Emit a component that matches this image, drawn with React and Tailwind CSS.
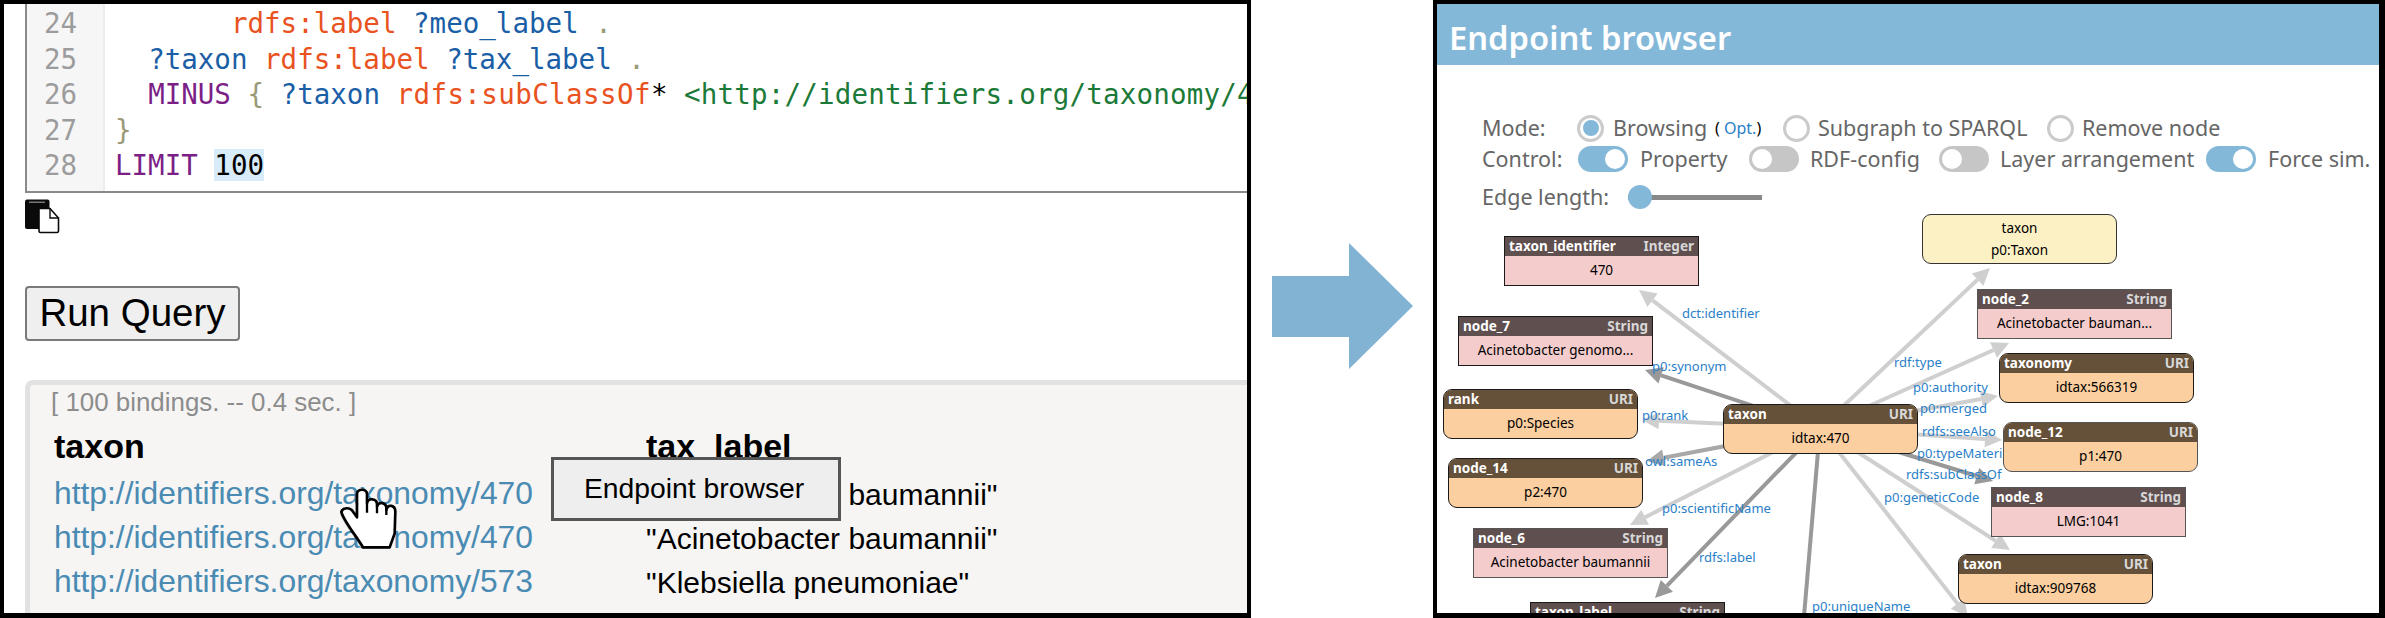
const mono = "font-['DejaVu_Sans_Mono',monospace]";
const sans = "font-['Liberation_Sans',Arial,sans-serif]";
const noto = "font-['Noto_Sans',sans-serif]";

const K = ({ c, children, x = '' }) => {
  const m = { p: 'text-[#e8531f]', v: 'text-[#1a5ea6]', k: 'text-[#7b1f87]', g: 'text-[#1c7a38]', o: 'text-[#9a9a78]', b: 'text-black' };
  return <span className={`${m[c]} ${x}`}>{children}</span>;
};

function CodeBox() {
  const nums = [24, 25, 26, 27, 28];
  return (
    <div className={`flex h-[189px] shrink-0 ml-[21px] border-l-2 border-b-2 border-[#8a8a8a] overflow-hidden ${mono} text-[27.5px] leading-[35.5px]`}>
      <div className="w-[78px] shrink-0 h-full bg-[#f6f6f6] border-r-2 border-[#ececec] text-[#9c9c9c] pl-[17px] pt-[2px]">
        {nums.map(n => <div key={n}>{n}</div>)}
      </div>
      <div className="pl-[10px] pt-[2px] whitespace-pre">
        <div>{'       '}<K c="p">rdfs:label</K> <K c="v">?meo_label</K> <K c="o">.</K></div>
        <div>{'  '}<K c="v">?taxon</K> <K c="p">rdfs:label</K> <K c="v">?tax_label</K> <K c="o">.</K></div>
        <div>{'  '}<K c="k">MINUS</K> <K c="o">{'{'}</K> <K c="v">?taxon</K> <K c="p" x="tracking-[0.4px]">rdfs:subClassOf</K><K c="b">*</K> <K c="g" x="tracking-[0.2px]">{'<http://identifiers.org/taxonomy/470>'}</K></div>
        <div><K c="o">{'}'}</K></div>
        <div><K c="k">LIMIT</K> <span className="bg-[#d8ebf8] text-black">100</span></div>
      </div>
    </div>
  );
}

function CopyIcon() {
  return (
    <svg width="36" height="35" viewBox="0 0 36 35" className="block ml-[20px] mt-[6px] shrink-0">
      <rect x="1" y="0.5" width="24.5" height="29.5" rx="2" fill="#0a0a0a" />
      <rect x="5" y="2.5" width="16" height="1.5" fill="#777" />
      <path d="M15 9.5 L26 9.5 L34.5 19 L34.5 32 Q34.5 33.5 33 33.5 L16.5 33.5 Q15 33.5 15 32 Z" fill="#fff" stroke="#0a0a0a" strokeWidth="1.6" />
      <path d="M26 9.5 L26 19 L34.5 19" fill="none" stroke="#0a0a0a" strokeWidth="1.4" />
    </svg>
  );
}

function HandCursor() {
  const d = "M125 125 C130 112 150 112 158 122 L172 142 L172 72 C172 55 202 55 202 72 L202 100 C205 82 232 85 232 103 L232 110 C236 93 260 97 260 114 L260 120 C265 100 287 105 287 125 L285 190 L270 232 L190 232 C175 205 130 150 125 125 Z";
  return (
    <svg width="60" height="65" viewBox="118 48 180 195" className="absolute left-[335px] top-[482px]">
      <path d={d} fill="#000" opacity="0.35" transform="translate(-4 4)" />
      <path d={d} fill="#fff" stroke="#000" strokeWidth="8" strokeLinejoin="round" />
      <path d="M202 100 L202 128 M232 110 L232 130 M260 120 L260 135" stroke="#000" strokeWidth="7" fill="none" />
    </svg>
  );
}

function LeftPanel() {
  return (
    <div className={`relative w-[1251px] h-[618px] shrink-0 flex flex-col bg-white border-l-4 border-r-4 border-t-4 border-b-[5px] border-black overflow-hidden ${sans}`}>
      <CodeBox />
      <CopyIcon />
      <button className="ml-[21px] mt-[52px] w-[215px] h-[55px] shrink-0 bg-[#efefef] border-2 border-[#7a7a7a] rounded-[4px] text-[38.5px] leading-none text-black">Run Query</button>
      <div className="ml-[21px] mt-[39px] flex-1 bg-[#f6f5f4] border-l-[5px] border-t-[5px] border-[#e2e2e2] rounded-tl-[8px] overflow-hidden">
        <div className="pl-[21px] h-[34px] leading-[34px] text-[25.9px] text-[#8c8c8c]">[ 100 bindings. -- 0.4 sec. ]</div>
        <div className="mt-[6px] grid grid-cols-[592px_1fr] pl-[24px] auto-rows-[44px] items-center">
          <div className="font-bold text-[34px] text-black mb-[2px]">taxon</div>
          <div className="font-bold text-[34px] text-black mb-[2px]">tax_label</div>
          <a className="text-[31.8px] text-[#4a8bb3] mt-[6px]">http://identifiers.org/taxonomy/470</a>
          <div className="text-[30px] text-black mt-[6px]">"Acinetobacter baumannii"</div>
          <a className="text-[31.8px] text-[#4a8bb3] mt-[6px]">http://identifiers.org/taxonomy/470</a>
          <div className="text-[30px] text-black mt-[6px]">"Acinetobacter baumannii"</div>
          <a className="text-[31.8px] text-[#4a8bb3] mt-[6px]">http://identifiers.org/taxonomy/573</a>
          <div className="text-[30px] text-black mt-[6px]">"Klebsiella pneumoniae"</div>
        </div>
      </div>
      <div className="absolute left-[547px] top-[453px] w-[290px] h-[64px] flex items-center pl-[30px] pb-[2px] bg-[#eeeeee] border-[3px] border-[#555] text-[28.3px] text-black">Endpoint browser</div>
      <HandCursor />
    </div>
  );
}

function BigArrow() {
  return (
    <svg width="141" height="126" viewBox="0 0 141 126" className="block shrink-0 ml-[21px] mt-[243px]">
      <polygon points="0,33 77,33 77,0 141,63 77,126 77,94 0,94" fill="#83b3d3" />
    </svg>
  );
}

function Radio({ on }) {
  return (
    <span className="w-[27px] h-[27px] shrink-0 rounded-full border-[3px] border-[#cbcbcb] bg-white flex items-center justify-center">
      {on && <span className="w-[16px] h-[16px] rounded-full bg-[#84b8d9]" />}
    </span>
  );
}

function Toggle({ on }) {
  return (
    <span className={`w-[50px] h-[26px] shrink-0 rounded-full flex items-center px-[3px] ${on ? 'bg-[#84b8d9] justify-end' : 'bg-[#c6c6c6] justify-start'}`}>
      <span className="w-[20px] h-[20px] rounded-full bg-white" />
    </span>
  );
}

function Edge({ x1, y1, x2, y2, c = '#cfcfcf', w = 4 }) {
  const dx = x2 - x1, dy = y2 - y1, L = Math.hypot(dx, dy), ux = dx / L, uy = dy / L;
  const bx = x2 - ux * 17, by = y2 - uy * 17, hw = 8.5;
  return (
    <g>
      <line x1={x1} y1={y1} x2={bx} y2={by} stroke={c} strokeWidth={w} />
      <polygon points={`${x2},${y2} ${bx - uy * hw},${by + ux * hw} ${bx + uy * hw},${by - ux * hw}`} fill={c} />
    </g>
  );
}

const edges = [
  { x2: 1639, y2: 290 },
  { x2: 1645, y2: 370, c: '#999999', w: 4 },
  { x2: 1642, y2: 420 },
  { x2: 1647, y2: 461, c: '#a8a8a8', w: 4 },
  { x2: 1630, y2: 525 },
  { x2: 1655, y2: 598, c: '#999999', w: 4 },
  { x2: 1802, y2: 640, c: '#999999', w: 4 },
  { x2: 1968, y2: 617 },
  { x2: 1990, y2: 268 },
  { x2: 2009, y2: 343 },
  { x2: 1998, y2: 396 },
  { x2: 2002, y2: 440 },
  { x2: 1993, y2: 481, c: '#999999', w: 4 },
  { x2: 2010, y2: 550 },
];

const labels = [
  ['dct:identifier', 'left-[245px] top-[93px]'],
  ['p0:synonym', 'left-[215px] top-[146px]'],
  ['p0:rank', 'left-[205px] top-[195px]'],
  ['owl:sameAs', 'left-[208px] top-[241px]'],
  ['p0:scientificName', 'left-[225px] top-[288px]'],
  ['rdfs:label', 'left-[262px] top-[337px]'],
  ['p0:uniqueName', 'left-[375px] top-[386px]'],
  ['rdf:type', 'left-[457px] top-[142px]'],
  ['p0:authority', 'left-[476px] top-[167px]'],
  ['p0:merged', 'left-[483px] top-[188px]'],
  ['rdfs:seeAlso', 'left-[485px] top-[211px]'],
  ['p0:typeMaterial', 'left-[480px] top-[233px]'],
  ['rdfs:subClassOf', 'left-[469px] top-[254px]'],
  ['p0:geneticCode', 'left-[447px] top-[277px]'],
];

const nodes = [
  { n: 'taxon_identifier', t: 'Integer', v: '470', k: 's', p: 'left-[67px] top-[26px]' },
  { n: 'node_7', t: 'String', v: 'Acinetobacter genomo...', k: 's', p: 'left-[21px] top-[106px]' },
  { n: 'rank', t: 'URI', v: 'p0:Species', k: 'u', p: 'left-[6px] top-[179px]' },
  { n: 'taxon', t: 'URI', v: 'idtax:470', k: 'u', p: 'left-[286px] top-[194px]' },
  { n: 'node_14', t: 'URI', v: 'p2:470', k: 'u', p: 'left-[11px] top-[248px]' },
  { n: 'node_6', t: 'String', v: 'Acinetobacter baumannii', k: 's', f: 1, p: 'left-[36px] top-[318px]' },
  { n: 'taxon_label', t: 'String', v: '', k: 's', p: 'left-[93px] top-[392px]' },
  { n: 'node_2', t: 'String', v: 'Acinetobacter bauman...', k: 's', f: 1, p: 'left-[540px] top-[79px]' },
  { n: 'taxonomy', t: 'URI', v: 'idtax:566319', k: 'u', p: 'left-[562px] top-[143px]' },
  { n: 'node_12', t: 'URI', v: 'p1:470', k: 'u', f: 1, p: 'left-[566px] top-[212px]' },
  { n: 'node_8', t: 'String', v: 'LMG:1041', k: 's', f: 1, p: 'left-[554px] top-[277px]' },
  { n: 'taxon', t: 'URI', v: 'idtax:909768', k: 'u', p: 'left-[521px] top-[344px]' },
];

function GraphNode({ n, t, v, k, p, f }) {
  const u = k === 'u';
  return (
    <div className={`absolute ${p} w-[195px] h-[50px] flex flex-col overflow-hidden border-[1.5px] ${f ? 'border-[#555]' : 'border-[#1a1a1a]'} ${u ? 'rounded-[9px] bg-[#fbcf9f]' : 'bg-[#f4cccc]'}`}>
      <div className={`h-[19px] shrink-0 flex items-center justify-between px-[4px] text-[13.5px] font-bold ${u ? 'bg-[#655039]' : 'bg-[#5f4f4f]'}`}>
        <span className="text-white">{n}</span>
        <span className="text-[#d8d8d8]">{t}</span>
      </div>
      <div className="flex-1 flex items-center justify-center text-[13.5px] text-black pb-[1px]">{v}</div>
    </div>
  );
}

function RightPanel() {
  return (
    <div className={`w-[952px] h-[618px] shrink-0 ml-[20px] flex flex-col bg-white border-l-4 border-r-[6px] border-t-4 border-b-[5px] border-black overflow-hidden ${noto}`}>
      <div className="h-[61px] shrink-0 bg-[#84b8d9] pl-[12px] flex items-center pt-[7px] text-[32.7px] font-semibold text-white">Endpoint browser</div>
      <div className="h-[145px] shrink-0 pl-[45px] pt-[49px] text-[21.5px] text-[#666666] flex flex-col whitespace-nowrap">
        <div className="flex items-center h-[28px]">
          <span className="w-[95px] shrink-0">Mode:</span>
          <Radio on />
          <span className="ml-[9px] w-[100px] shrink-0">Browsing</span>
          <span className="ml-[2px] w-[68px] shrink-0 text-[16px] text-black">( <span className="text-[#2a7fc8]">Opt.</span>)</span>
          <Radio />
          <span className="ml-[8px] w-[229px] shrink-0">Subgraph to SPARQL</span>
          <Radio />
          <span className="ml-[8px]">Remove node</span>
        </div>
        <div className="flex items-center h-[28px] mt-[3px]">
          <span className="w-[96px] shrink-0">Control:</span>
          <Toggle on />
          <span className="ml-[12px] w-[109px] shrink-0">Property</span>
          <Toggle />
          <span className="ml-[11px] w-[129px] shrink-0">RDF-config</span>
          <Toggle />
          <span className="ml-[11px] w-[206px] shrink-0">Layer arrangement</span>
          <Toggle on />
          <span className="ml-[12px]">Force sim.</span>
        </div>
        <div className="flex items-center h-[28px] mt-[10px]">
          <span className="w-[146px] shrink-0">Edge length:</span>
          <div className="relative w-[134px] h-[24px] flex items-center">
            <div className="w-full h-[5px] bg-[#888888]" />
            <div className="absolute left-0 top-0 w-[24px] h-[24px] rounded-full bg-[#84b8d9]" />
          </div>
        </div>
      </div>
      <div className="relative flex-1 overflow-hidden">
        <svg viewBox="1437 210 942 403" className="absolute inset-0 w-full h-full">
          {edges.map((e, i) => <Edge key={i} x1={1820} y1={428} {...e} />)}
        </svg>
        {labels.map(([t, p]) => (
          <span key={t} className={`absolute ${p} text-[13px] leading-[20px] text-[#2a80c8] whitespace-nowrap`}>{t}</span>
        ))}
        <div className="absolute left-[485px] top-[4px] w-[195px] h-[50px] flex flex-col items-center justify-center gap-[3px] rounded-[9px] border-[1.5px] border-[#333] bg-[#fcf1c4] text-[13.5px] leading-[19px] text-black">
          <span>taxon</span>
          <span>p0:Taxon</span>
        </div>
        {nodes.map((d, i) => <GraphNode key={i} {...d} />)}
      </div>
    </div>
  );
}

export default function App() {
  return (
    <div className="flex w-[2385px] h-[618px] items-start bg-white overflow-hidden">
      <LeftPanel />
      <BigArrow />
      <RightPanel />
    </div>
  );
}
